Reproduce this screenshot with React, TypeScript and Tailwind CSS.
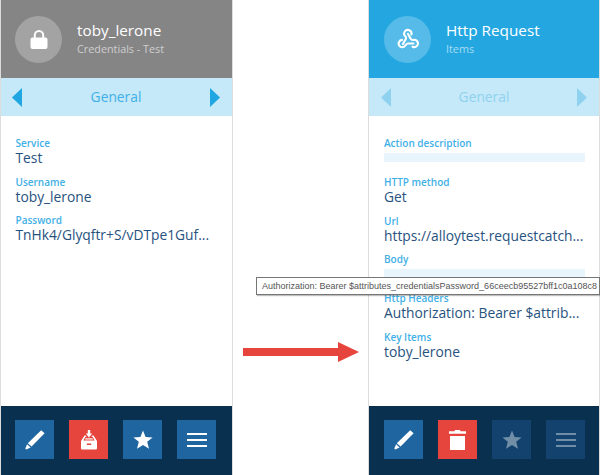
const font = { fontFamily: '"Open Sans", "Noto Sans", sans-serif' };

function Pencil() {
  return (
    <svg width="22" height="22" viewBox="0 0 22 22" fill="#fff">
      <path d="M17.2 1.2 L20.6 4.3 L7.6 17.6 L3.8 14.2 Z" />
      <path d="M3.1 15.2 L6.6 18.4 L3.4 20 L1.9 20.4 L1.4 19.2 Z" />
    </svg>
  );
}
function Star({ op = 1 }: { op?: number }) {
  return (
    <svg width="20" height="20" viewBox="0 0 20 20" fill="#fff" opacity={op}>
      <path d="M10 .6 L12.6 7 L19.6 7.4 L14.2 11.8 L16 18.8 L10 15 L4 18.800 L5.800 11.800 L.4 7.400 L7.400 7 Z" />
    </svg>
  );
}
function Bars({ op = 1 }: { op?: number }) {
  return (
    <svg width="20" height="14" viewBox="0 0 20 14" fill="#fff" opacity={op}>
      <rect x="0" y="0" width="20" height="2" />
      <rect x="0" y="6" width="20" height="2" />
      <rect x="0" y="12" width="20" height="2" />
    </svg>
  );
}
function Inbox() {
  return (
    <svg width="18" height="20" viewBox="0 0 18 20" fill="#fff">
      <path d="M7.800 0h2.400v3.500h2L9 7.500 5.800 3.500h2z" />
      <path d="M4.500 5.500h1.200l1 1.200H5.400L3.400 10.500h11.200l-2-3.800h-1.300l1-1.200h1.200L17 11H1z" />
      <path d="M5.600 8h6.800l.8 1.800H4.800z" opacity=".7" />
      <path fillRule="evenodd" d="M1 11h16v7.500a1 1 0 0 1-1 1H2a1 1 0 0 1-1-1z M6.800 13.500v1.500h4.400v-1.500z" />
    </svg>
  );
}
function Trash() {
  return (
    <svg width="17" height="20" viewBox="0 0 17 20" fill="#fff">
      <path d="M6 0h5l.5 1.200h5.500V3.800H0V1.200h5.500z" />
      <path d="M1 6h15v14H1z" />
    </svg>
  );
}
function Lock() {
  return (
    <svg width="18" height="19" viewBox="0 0 18 19" fill="#fff">
      <path d="M4.800 9V5.200a4.200 4.200 0 0 1 8.400 0V9" fill="none" stroke="#fff" strokeWidth="2" />
      <rect x="0.500" y="7.500" width="17" height="11.500" rx="2" />
    </svg>
  );
}
function Webhook() {
  return (
    <svg width="22" height="22" viewBox="0 0 24 24" fill="none" stroke="#fff" strokeWidth="2.300" strokeLinecap="round" strokeLinejoin="round">
      <path d="M18 16.980h-5.990c-1.100 0-1.980.900-2.690 1.900A4 4 0 1 1 5.500 13" />
      <path d="M6.500 17.500 9.600 11.900c.5-.9.100-2-.5-2.900a4 4 0 1 1 6.600-1.900" />
      <path d="M12 6.500l3.100 5.500c.5.900 1.600 1.100 2.700 1a4 4 0 1 1-.8 7.400" />
    </svg>
  );
}

function Tri({ dir, faded }: { dir: "l" | "r"; faded?: boolean }) {
  return (
    <svg width="10" height="19" viewBox="0 0 10 19" fill={faded ? "#8fd2ef" : "#20a7e2"}>
      <path d={dir === "l" ? "M10 0V19L0 9.500Z" : "M0 0V19L10 9.500Z"} />
    </svg>
  );
}

function Field({ label, value, mt }: { label: string; value: string; mt: string }) {
  return (
    <div className={mt}>
      <div className="text-[10px] leading-[14px] font-semibold text-[#3fb0e6]">{label}</div>
      <div className="text-[13.800px] leading-[16px] text-[#27527e] whitespace-nowrap">{value}</div>
    </div>
  );
}

function Blank({ label, mt }: { label: string; mt: string }) {
  return (
    <div className={mt}>
      <div className="text-[10px] leading-[14px] font-semibold text-[#3fb0e6]">{label}</div>
      <div className="mt-[3px] h-[9px] bg-[#e8f5fc]" />
    </div>
  );
}

function Btn({ color, children }: { color: string; children: React.ReactNode }) {
  return <div className={`w-[39px] h-[39px] flex items-center justify-center ${color}`}>{children}</div>;
}

function Panel({
  width, pad, navPad, bodyPad, headBg, circle, icon, title, sub, faded, children, buttons, subColor,
}: {
  width: string; pad: string; navPad: string; bodyPad: string; headBg: string; circle: string; icon: React.ReactNode; title: string; sub: string; subColor: string;
  faded?: boolean; children: React.ReactNode; buttons: React.ReactNode;
}) {
  return (
    <div className={`h-[475px] flex flex-col border-x border-[#dcdcdc] ${width}`}>
      <div className={`h-[78px] flex items-center shrink-0 ${pad} ${headBg}`}>
        <div className={`w-[47px] h-[47px] rounded-full flex items-center justify-center ${circle}`}>{icon}</div>
        <div className="ml-[15px] -mt-[2px]">
          <div className="text-[15.300px] leading-[22px] text-white">{title}</div>
          <div className={`text-[10.800px] leading-[16px] ${subColor}`}>{sub}</div>
        </div>
      </div>
      <div className={`h-[38px] bg-[#c5e9f8] flex items-center justify-between pr-[12px] shrink-0 ${navPad}`}>
        <Tri dir="l" faded={faded} />
        <span className={`text-[13.800px] ${faded ? "text-[#8fd2ef]" : "text-[#3fb0e6]"}`}>General</span>
        <Tri dir="r" faded={faded} />
      </div>
      <div className={`flex-1 bg-white pt-[20px] overflow-hidden ${bodyPad}`}>{children}</div>
      <div className={`h-[69px] bg-[#0a3050] flex items-center gap-[15px] pb-[2px] shrink-0 ${pad}`}>{buttons}</div>
    </div>
  );
}

export default function App() {
  return (
    <div className="relative w-[600px] h-[475px] bg-white overflow-hidden flex justify-between" style={font}>
      <Panel
        width="w-[233px]" pad="pl-[14px]" navPad="pl-[11px]" bodyPad="pl-[14.500px] pr-[14px]"
        headBg="bg-[#858585]" circle="bg-[#a3a3a3]" icon={<Lock />} title="toby_lerone" sub="Credentials - Test" subColor="text-[#cfcfcf]"
        buttons={<>
          <Btn color="bg-[#1f659f]"><Pencil /></Btn>
          <Btn color="bg-[#e5453c]"><Inbox /></Btn>
          <Btn color="bg-[#1f659f]"><Star /></Btn>
          <Btn color="bg-[#1f659f]"><Bars /></Btn>
        </>}
      >
        <Field label="Service" value="Test" mt="" />
        <Field label="Username" value="toby_lerone" mt="mt-[8.500px]" />
        <Field label="Password" value="TnHk4/Glyqftr+S/vDTpe1Guf..." mt="mt-[8.500px]" />
      </Panel>

      <Panel
        width="w-[232px]" pad="pl-[15px]" navPad="pl-[12px]" bodyPad="pl-[15px] pr-[14px]"
        headBg="bg-[#24a7e1]" circle="bg-[#56bbe8]" icon={<Webhook />} title="Http Request" sub="Items" subColor="text-[#a6dcf4]" faded
        buttons={<>
          <Btn color="bg-[#1f659f]"><Pencil /></Btn>
          <Btn color="bg-[#e5453c]"><Trash /></Btn>
          <Btn color="bg-[#12426d]"><Star op={0.4} /></Btn>
          <Btn color="bg-[#12426d]"><Bars op={0.4} /></Btn>
        </>}
      >
        <Blank label="Action description" mt="" />
        <Field label="HTTP method" value="Get" mt="mt-[13px]" />
        <Field label="Url" value="https://alloytest.requestcatch..." mt="mt-[8.500px]" />
        <Blank label="Body" mt="mt-[8.500px]" />
        <Field label="Http Headers" value="Authorization: Bearer $attrib..." mt="mt-[13px]" />
        <Field label="Key Items" value="toby_lerone" mt="mt-[8.500px]" />
      </Panel>

      <div className="absolute left-[256px] top-[277px] w-[344px] h-[18px] bg-white border border-[#767676] shadow-[1px_1px_1px_rgba(0,0,0,0.25)] pl-[5px] text-[9px] leading-[16px] text-[#555] whitespace-nowrap overflow-hidden" style={{ fontFamily: '"Liberation Sans", Arial, sans-serif' }}>
        Authorization: Bearer $attributes_credentialsPassword_66ceecb95527bff1c0a108c8
      </div>

      <svg className="absolute left-[243px] top-[342px]" width="116" height="20" viewBox="0 0 116 20" fill="#e5453c">
        <path d="M0 6H95V0L116 10 95 20V14H0Z" />
      </svg>
    </div>
  );
}
